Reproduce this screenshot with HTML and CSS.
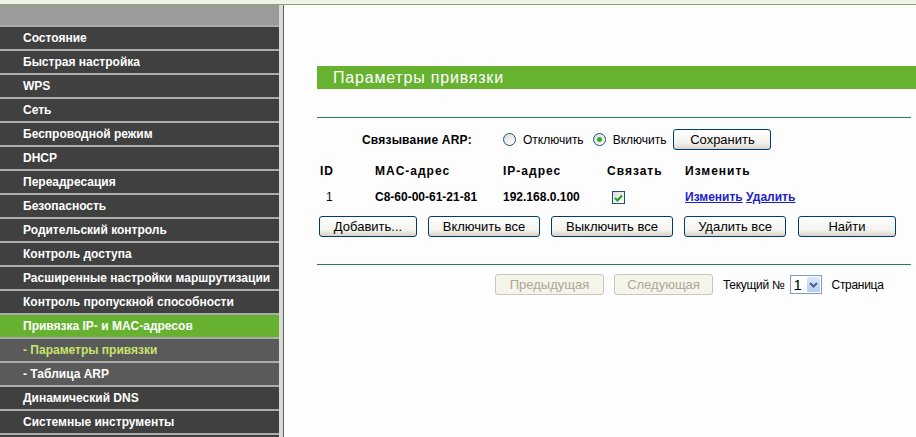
FILE: index.html
```html
<!DOCTYPE html>
<html lang="ru">
<head>
  <meta charset="UTF-8">
  <title>Параметры привязки</title>
  <link rel="stylesheet" href="styles.css">
</head>
<body>
  <div class="topbar"></div>
  <div class="frame">
    <div class="menu">
      <div class="menu-head"></div>
      <div class="item">Состояние</div>
      <div class="item">Быстрая настройка</div>
      <div class="item">WPS</div>
      <div class="item">Сеть</div>
      <div class="item">Беспроводной режим</div>
      <div class="item">DHCP</div>
      <div class="item">Переадресация</div>
      <div class="item">Безопасность</div>
      <div class="item">Родительский контроль</div>
      <div class="item">Контроль доступа</div>
      <div class="item">Расширенные настройки маршрутизации</div>
      <div class="item">Контроль пропускной способности</div>
      <div class="item active">Привязка IP- и MAC-адресов</div>
      <div class="item sub current">- Параметры привязки</div>
      <div class="item sub">- Таблица ARP</div>
      <div class="item">Динамический DNS</div>
      <div class="item">Системные инструменты</div>
      <div class="item"></div>
    </div>

    <div class="content">
      <div class="title">Параметры привязки</div>
      <div class="rule"></div>

      <div class="arp-row">
        <span class="arp-label">Связывание ARP:</span>
        <span class="radio"></span><span class="opt">Отключить</span>
        <span class="radio on"></span><span class="opt">Включить</span>
        <button class="btn save">Сохранить</button>
      </div>

      <div class="grid head">
        <span>ID</span>
        <span>MAC-адрес</span>
        <span>IP-адрес</span>
        <span>Связать</span>
        <span>Изменить</span>
      </div>
      <div class="grid data">
        <span class="num">1</span>
        <span>C8-60-00-61-21-81</span>
        <span>192.168.0.100</span>
        <span><span class="check"><svg width="9" height="8" viewBox="0 0 9 8"><path d="M1 4 L3.5 6.5 L8 1.5" fill="none" stroke="#21a121" stroke-width="2"/></svg></span></span>
        <span><a href="#">Изменить</a> <a href="#">Удалить</a></span>
      </div>

      <div class="actions">
        <button class="btn w-add">Добавить...</button>
        <button class="btn w-on">Включить все</button>
        <button class="btn w-off">Выключить все</button>
        <button class="btn w-del">Удалить все</button>
        <button class="btn w-find">Найти</button>
      </div>

      <div class="rule second"></div>

      <div class="pager">
        <button class="btn off w-prev">Предыдущая</button>
        <button class="btn off w-next">Следующая</button>
        <span class="opt">Текущий №</span>
        <span class="select"><span class="sel-val">1</span><span class="sel-btn"><svg width="9" height="6" viewBox="0 0 9 6"><path d="M1 1 L4.5 4.5 L8 1" fill="none" stroke="#4d6185" stroke-width="2"/></svg></span></span>
        <span class="opt">Страница</span>
      </div>
    </div>
  </div>
</body>
</html>
```

FILE: styles.css
```css
body {
  margin: 0;
  width: 916px;
  height: 437px;
  overflow: hidden;
  background-color: #fdfdfd;
  font-family: "Liberation Sans", Arial, sans-serif;
  font-size: 12px;
}

.topbar {
  height: 4px;
  background-color: #eef5e6;
  border-bottom: 1px solid #86a96a;
}

.frame {
  display: flex;
  height: 432px;
}

/* left menu */
.menu {
  width: 279px;
  flex-shrink: 0;
  background-color: #a9a9a9;
  border-right: 4px solid #d9d9d6;
}

.menu-head {
  height: 20px;
  background-color: #9b9b9b;
}

.item {
  height: 22px;
  line-height: 22px;
  border-top: 2px solid #acacac;
  background-color: #404040;
  color: #fff;
  font-weight: bold;
  padding-left: 23px;
  white-space: nowrap;
}

.item.active {
  background-color: #66b12f;
}

.item.sub {
  background-color: #5a5a5a;
}

.item.current {
  color: #c9e36c;
}

/* right part */
.content {
  flex: 1;
  border-left: 1px solid #5c5c5c;
  background-color: #fdfdfd;
  padding: 61px 5px 0 33px;
}

.title {
  height: 23px;
  line-height: 23px;
  margin-right: -5px;
  background-color: #67b22f;
  color: #fff;
  font-size: 16px;
  letter-spacing: 0.8px;
  padding-left: 16px;
}

.rule {
  height: 1px;
  background-color: #2f7a56;
  margin-top: 28px;
}

.rule.second {
  margin-top: 27px;
}

.arp-row {
  display: flex;
  align-items: center;
  height: 21px;
  margin-top: 11px;
}

.arp-label {
  font-weight: bold;
  margin-left: 45px;
  margin-right: 31px;
  letter-spacing: 0.2px;
}

.opt {
  font-size: 12px;
  color: #000;
}

.radio {
  width: 11px;
  height: 11px;
  border: 1px solid #1c5180;
  border-radius: 50%;
  background: linear-gradient(135deg, #dcdbd5, #fff);
  margin-right: 7px;
  margin-left: 9px;
  position: relative;
}

.arp-label + .radio {
  margin-left: 0;
}

.radio.on::after {
  content: "";
  position: absolute;
  left: 3px;
  top: 3px;
  width: 5px;
  height: 5px;
  border-radius: 50%;
  background-color: #2cae2c;
}

.btn {
  height: 21px;
  padding: 0;
  border: 1px solid #003c74;
  border-radius: 3px;
  background: linear-gradient(#ffffff, #f2f1ec 70%, #d8d3c7);
  font-family: "Liberation Sans", Arial, sans-serif;
  font-size: 13px;
  color: #000;
}

.btn.save {
  width: 98px;
  margin-left: 7px;
}

.grid {
  display: grid;
  grid-template-columns: 55px 128px 104px 78px auto;
  align-items: center;
  font-weight: bold;
  margin-left: 3px;
}

.grid.head {
  height: 20px;
  margin-top: 11px;
  letter-spacing: 1px;
}

.grid.data {
  height: 20px;
  margin-top: 6px;
}

.grid .num {
  font-weight: normal;
  padding-left: 6px;
}

.check {
  display: inline-flex;
  align-items: center;
  justify-content: center;
  width: 11px;
  height: 11px;
  margin-left: 5px;
  border: 1px solid #1c5180;
  background: linear-gradient(135deg, #dcdbd5, #fff);
  vertical-align: middle;
}

.grid a {
  color: #1d1dcc;
  text-decoration: underline;
}

.actions {
  display: flex;
  gap: 11px;
  margin-top: 9px;
  margin-left: 2px;
}

.w-add { width: 98px; }
.w-on { width: 112px; }
.w-off { width: 122px; }
.w-del { width: 102px; }
.w-find { width: 98px; margin-left: 1px; }
.w-prev { width: 109px; }
.w-next { width: 99px; }

.pager {
  display: flex;
  align-items: center;
  margin-top: 9px;
  margin-left: 178px;
}

.pager .w-next {
  margin-left: 10px;
  margin-right: 10px;
}

.pager .opt {
  letter-spacing: -0.3px;
}

.btn.off {
  border-color: #c9c7ba;
  background: #f5f4ea;
  color: #aca899;
}

.select {
  display: flex;
  width: 30px;
  height: 17px;
  margin-left: 5px;
  margin-right: 10px;
  border: 1px solid #7f9db9;
  background-color: #fff;
}

.sel-val {
  flex: 1;
  font-size: 15px;
  line-height: 17px;
  padding-left: 3px;
}

.sel-btn {
  width: 15px;
  display: flex;
  align-items: center;
  justify-content: center;
  background: linear-gradient(#dce8fe, #b7cdf7);
  border: 1px solid #fff;
  box-sizing: border-box;
}
```
